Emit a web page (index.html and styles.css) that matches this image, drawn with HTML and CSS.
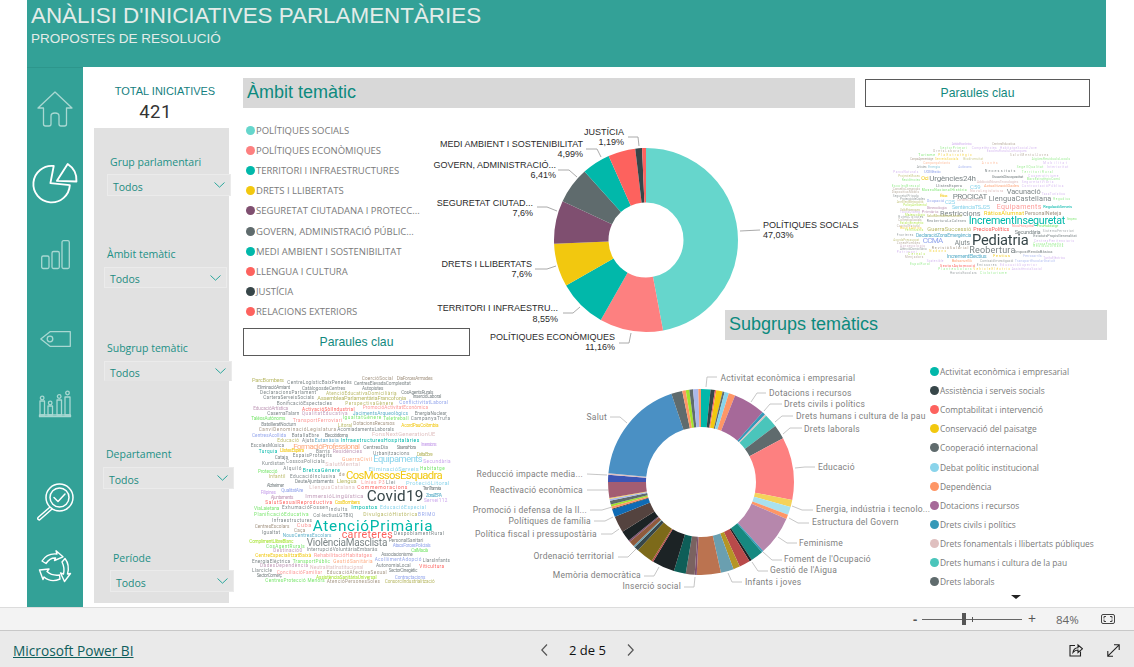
FILE: index.html
```html
<!DOCTYPE html>
<html lang="ca">
<head>
<meta charset="utf-8">
<title>Anàlisi d'iniciatives parlamentàries</title>
<link rel="stylesheet" href="styles.css">
</head>
<body>
<div class="app">
  <div class="report">
    <header class="report-head">
      <h1>ANÀLISI D'INICIATIVES PARLAMENTÀRIES</h1>
      <p>PROPOSTES DE RESOLUCIÓ</p>
    </header>
    <div class="main">
      <nav class="sidebar">
        <svg class="ico ico-home" width="36" height="36" viewBox="0 0 36 36"><path d="M18 1 L1 17 H6.500 V33 Q6.500 35 8.500 35 H12 Q14 35 14 33 V25 Q14 22 18 22 Q22 22 22 25 V33 Q22 35 24 35 H27.500 Q29.500 35 29.500 33 V17 H35 Z"/></svg>
        <svg class="ico ico-pie" width="46" height="40" viewBox="0 0 46 41"><path d="M21.700 3.100 L18.300 20.700 L38.200 22.700 A18.700 18.700 0 1 1 21.700 3.100 Z"/><path d="M36 1 L25 18.300 L45 19 A20 20 0 0 0 36 1 Z"/></svg>
        <svg class="ico ico-bars" width="29" height="29" viewBox="0 0 29 29"><rect x="0.700" y="16" width="7.300" height="12.500" rx="1.500"/><rect x="11" y="11.500" width="7.300" height="17" rx="1.500"/><rect x="21" y="0.700" width="7.300" height="27.800" rx="1.500"/></svg>
        <svg class="ico ico-tag" width="31" height="16" viewBox="0 0 31 16"><path d="M0.800 8 L10 0.700 H30.300 V15.300 H10 Z"/><circle cx="10" cy="8" r="2.800"/></svg>
        <svg class="ico ico-podium" width="32" height="27" viewBox="0 0 32 27"><rect x="1" y="11" width="4.500" height="14"/><rect x="9" y="16" width="4.500" height="9"/><rect x="18" y="10" width="4.500" height="15"/><rect x="26" y="7" width="5" height="18"/><rect x="0.500" y="25" width="31" height="1.700"/><circle cx="3.200" cy="8" r="1.800"/><circle cx="11.200" cy="13" r="1.800"/><circle cx="20.200" cy="6.500" r="1.800"/><circle cx="28.500" cy="3" r="1.800"/></svg>
        <svg class="ico ico-search" width="38" height="38" viewBox="0 0 38 38"><circle cx="23.500" cy="14.500" r="13.500"/><circle cx="23.500" cy="14.500" r="9.500"/><path d="M18 14.500 l4 4 l7 -7.500"/><path d="M13.500 24.500 L2 34.500 Q1 36.500 3.500 37 L15.500 26.500"/></svg>
        <svg class="ico ico-cycle" width="32" height="33" viewBox="0 0 32 33"><path d="M3 11 Q8 3 18 4 L17 0.800 L24 6.800 L15.500 10.500 L16.500 8 Q11 7.500 7 13.500 Z"/><path d="M26 8.500 Q31 15 28.500 24 L31.500 23.500 L25.500 31.500 L21.500 23 L24.500 24 Q26 18 23 12 Z"/><path d="M21 29 Q12 33 5 27 L4 29.500 L0.500 20 L10 19 L8 21.500 Q13 26 20.500 25 Z"/></svg>
      </nav>
      <aside class="filters">
        <div class="kpi">
          <div class="kpi-label">TOTAL INICIATIVES</div>
          <div class="kpi-value">421</div>
        </div>
        <div class="panel">
          <div class="slicer slicer-1">
            <div class="slicer-label">Grup parlamentari</div>
            <div class="slicer-box"><span>Todos</span><svg class="chev" width="11" height="6" viewBox="0 0 11 6"><path d="M0.500 0.500 L5.500 5.200 L10.500 0.500"/></svg></div>
          </div>
          <div class="slicer slicer-2">
            <div class="slicer-label">Àmbit temàtic</div>
            <div class="slicer-box"><span>Todos</span><svg class="chev" width="11" height="6" viewBox="0 0 11 6"><path d="M0.500 0.500 L5.500 5.200 L10.500 0.500"/></svg></div>
          </div>
          <div class="slicer slicer-3">
            <div class="slicer-label">Subgrup temàtic</div>
            <div class="slicer-box"><span>Todos</span><svg class="chev" width="11" height="6" viewBox="0 0 11 6"><path d="M0.500 0.500 L5.500 5.200 L10.500 0.500"/></svg></div>
          </div>
          <div class="slicer slicer-4">
            <div class="slicer-label">Departament</div>
            <div class="slicer-box"><span>Todos</span><svg class="chev" width="11" height="6" viewBox="0 0 11 6"><path d="M0.500 0.500 L5.500 5.200 L10.500 0.500"/></svg></div>
          </div>
          <div class="slicer slicer-5">
            <div class="slicer-label">Període</div>
            <div class="slicer-box"><span>Todos</span><svg class="chev" width="11" height="6" viewBox="0 0 11 6"><path d="M0.500 0.500 L5.500 5.200 L10.500 0.500"/></svg></div>
          </div>
        </div>
      </aside>
      <section class="canvas">
        <h2 class="bar-title title-ambit">Àmbit temàtic</h2>
        <div class="key-btn btn-top">Paraules clau</div>
        <ul class="legend legend-ambit">
          <li><i class="dot d-turq"></i>POLÍTIQUES SOCIALS</li>
          <li><i class="dot d-salmon"></i>POLÍTIQUES ECONÒMIQUES</li>
          <li><i class="dot d-teal"></i>TERRITORI I INFRAESTRUCTURES</li>
          <li><i class="dot d-yellow"></i>DRETS I LLIBERTATS</li>
          <li><i class="dot d-plum"></i>SEGURETAT CIUTADANA I PROTECC...</li>
          <li><i class="dot d-grey"></i>GOVERN, ADMINISTRACIÓ PÚBLIC...</li>
          <li><i class="dot d-teal"></i>MEDI AMBIENT I SOSTENIBILITAT</li>
          <li><i class="dot d-red"></i>LLENGUA I CULTURA</li>
          <li><i class="dot d-dark"></i>JUSTÍCIA</li>
          <li><i class="dot d-red"></i>RELACIONS EXTERIORS</li>
        </ul>
        <div class="key-btn btn-left">Paraules clau</div>

        <svg class="donut-ambit" width="330" height="240" viewBox="430 120 330 240">
          <g class="ring-a" transform="rotate(-90 646 240)">
            <circle cx="646" cy="240" r="64.750" pathLength="100" class="s-turq" stroke-dasharray="47.030 100" stroke-dashoffset="0"/>
            <circle cx="646" cy="240" r="64.750" pathLength="100" class="s-salmon" stroke-dasharray="11.160 100" stroke-dashoffset="-47.030"/>
            <circle cx="646" cy="240" r="64.750" pathLength="100" class="s-teal" stroke-dasharray="8.550 100" stroke-dashoffset="-58.190"/>
            <circle cx="646" cy="240" r="64.750" pathLength="100" class="s-yellow" stroke-dasharray="7.600 100" stroke-dashoffset="-66.740"/>
            <circle cx="646" cy="240" r="64.750" pathLength="100" class="s-plum" stroke-dasharray="7.600 100" stroke-dashoffset="-74.340"/>
            <circle cx="646" cy="240" r="64.750" pathLength="100" class="s-grey" stroke-dasharray="6.410 100" stroke-dashoffset="-81.940"/>
            <circle cx="646" cy="240" r="64.750" pathLength="100" class="s-teal" stroke-dasharray="4.990 100" stroke-dashoffset="-88.350"/>
            <circle cx="646" cy="240" r="64.750" pathLength="100" class="s-red" stroke-dasharray="4.770 100" stroke-dashoffset="-93.340"/>
            <circle cx="646" cy="240" r="64.750" pathLength="100" class="s-dark" stroke-dasharray="1.190 100" stroke-dashoffset="-98.110"/>
            <circle cx="646" cy="240" r="64.750" pathLength="100" class="s-red" stroke-dasharray="0.700 100" stroke-dashoffset="-99.300"/>
          </g>
          <g class="leaders">
            <polyline points="628,137 638,137 639,146"/>
            <polyline points="586,149 597,149 601,157"/>
            <polyline points="558,170 569,170 577,177"/>
            <polyline points="537,207 547,207 557,211"/>
            <polyline points="535,269 547,269 556,266"/>
            <polyline points="563,313 573,313 580,307"/>
            <polyline points="619,343 629,343 631,333"/>
            <polyline points="740,231 760,230"/>
          </g>
          <g class="labels-a end">
            <text x="624" y="135">JUSTÍCIA</text><text x="624" y="145">1,19%</text>
            <text x="583" y="147">MEDI AMBIENT I SOSTENIBILITAT</text><text x="583" y="157">4,99%</text>
            <text x="556" y="168">GOVERN, ADMINISTRACIÓ...</text><text x="556" y="178">6,41%</text>
            <text x="533" y="206">SEGURETAT CIUTAD...</text><text x="533" y="216">7,6%</text>
            <text x="532" y="267">DRETS I LLIBERTATS</text><text x="532" y="277">7,6%</text>
            <text x="558" y="311">TERRITORI I INFRAESTRU...</text><text x="558" y="322">8,55%</text>
            <text x="615" y="340">POLÍTIQUES ECONÒMIQUES</text><text x="615" y="350">11,16%</text>
          </g>
          <g class="labels-a">
            <text x="763" y="228">POLÍTIQUES SOCIALS</text><text x="763" y="238">47,03%</text>
          </g>
        </svg>

        <svg class="cloud cloud-top" width="200" height="150" viewBox="0 0 600 450">
          <text class="w f9 c-lv" x="185" y="44" textLength="60">ActivitatEconòmica</text>
          <text class="w f9 c-br" x="306" y="44" textLength="70">CentresEducatius</text>
          <text class="w f9 c-gr" x="150" y="56" textLength="80">SectorPrimari</text>
          <text class="w f9 c-lv" x="245" y="56" textLength="75">Competències</text>
          <text class="w f9 c-lv" x="330" y="56" textLength="110">HabitatgeSocialJove</text>
          <text class="w f9 c-br" x="130" y="66" textLength="90">DretsLaborals</text>
          <text class="w f9 c-lv" x="290" y="66" textLength="120">EscolesRuralsComarques</text>
          <text class="w f10 c-gr" x="85" y="78" textLength="50">Turisme</text>
          <text class="w f9 c-y" x="145" y="78" textLength="100">PlaEstratègic</text>
          <text class="w f9 c-br" x="360" y="78" textLength="115">SalutMentalJoves</text>
          <text class="w f9 c-br" x="60" y="91" textLength="70">CampsAprenentatge</text>
          <text class="w f9 c-ol" x="220" y="91" textLength="60">Biodiversitat</text>
          <text class="w f9 c-y" x="135" y="91" textLength="70">ServeisSocials</text>
          <text class="w f9 c-gr" x="425" y="91" textLength="115">AigüesResidualsLocals</text>
          <text class="w f9 c-o" x="100" y="103" textLength="80">CampanyaInfants</text>
          <text class="w f9 c-o" x="275" y="103" textLength="48">Aranès</text>
          <text class="w f9 c-lv" x="460" y="103" textLength="70">Mobilitat</text>
          <text class="w f9 c-g" x="80" y="115" textLength="30">Artistes</text>
          <text class="w f9 c-u" x="115" y="115" textLength="35">Energia</text>
          <text class="w f9 c-pv" x="205" y="115" textLength="40">Autònoms</text>
          <text class="w f9 c-gr" x="380" y="115" textLength="80">SegellQualitat</text>
          <text class="w f9 c-lv" x="470" y="115" textLength="65">Interioritat</text>
          <text class="w f9 c-lv" x="10" y="128" textLength="75">ParcsNaturals</text>
          <text class="w f12 c-pv" x="102" y="128" textLength="50">UOMéstic</text>
          <text class="w f11 c-g" x="284" y="125" textLength="92">Necessitats</text>
          <text class="w f9 c-gr" x="395" y="128" textLength="95">TerritoriRural</text>
          <text class="w f24 c-g" x="118" y="152" textLength="140">Urgències24h</text>
          <text class="w f16 c-y" x="94" y="150" textLength="22">Oci</text>
          <text class="w f9 c-ol" x="25" y="141" textLength="65">ProjecteMuseu</text>
          <text class="w f12 c-g" x="305" y="145" textLength="95">UsuarisDiscapacitat</text>
          <text class="w f9 c-lv" x="415" y="140" textLength="90">Cooperativisme</text>
          <text class="w f9 c-gr" x="410" y="150" textLength="100">MarcEstratègicComú</text>
          <text class="w f9 c-gr" x="35" y="153" textLength="55">Residències</text>
          <text class="w f11 c-pk" x="260" y="158" textLength="125">AddiccióNovesTecnologies</text>
          <text class="w f9 c-lv" x="395" y="160" textLength="95">SeguretatViària</text>
          <text class="w f18 c-b" x="240" y="178" textLength="32">C59</text>
          <text class="w f12 c-g" x="138" y="172" textLength="78">LlistesEspera</text>
          <text class="w f12 c-o" x="282" y="172" textLength="105">ActualitzacióDades</text>
          <text class="w f9 c-gr" x="5" y="170" textLength="85">EscolesBressol</text>
          <text class="w f9 c-lv" x="395" y="172" textLength="125">ContractacióPública</text>
          <text class="w f9 c-br" x="8" y="180" textLength="82">ConsellsComarcals</text>
          <text class="w f10 c-gr" x="95" y="183" textLength="135">MuseuNacionalHistòria</text>
          <text class="w f11 c-pk" x="240" y="186" textLength="100">NovaLegislatura</text>
          <text class="w f22 c-g" x="350" y="192" textLength="102">Vacunació</text>
          <text class="w f9 c-br" x="5" y="190" textLength="82">DispositiusMòbils</text>
          <text class="w f12 c-y" x="150" y="200" textLength="22">Ètica</text>
          <text class="w f24 c-g" x="188" y="206" textLength="104">PROCICAT</text>
          <text class="w f22 c-g" x="296" y="214" textLength="188">LlenguaCastellana</text>
          <text class="w f9 c-lv" x="455" y="196" textLength="70">TaxaTurística</text>
          <text class="w f9 c-g" x="8" y="200" textLength="78">SeguretatPrivada</text>
          <text class="w f9 c-gr" x="490" y="210" textLength="50">Regadius</text>
          <text class="w f18 c-b" x="165" y="222" textLength="30">C25</text>
          <text class="w f11 c-pv" x="110" y="216" textLength="52">Ocupació</text>
          <text class="w f11 c-pk" x="200" y="214" textLength="78">CerclesComunals</text>
          <text class="w f9 c-g" x="30" y="210" textLength="75">ProtecciódeDades</text>
          <text class="w f9 c-ol" x="20" y="220" textLength="80">AnellVerdMetropolità</text>
          <text class="w f17 c-b" x="186" y="236" textLength="114">SentènciaTSJ25</text>
          <text class="w f21 c-s" x="320" y="238" textLength="134">Equipaments</text>
          <text class="w f12 c-t" x="460" y="234" textLength="86">RegulacióServeis</text>
          <text class="w f9 c-lm" x="40" y="228" textLength="70">PolicyAmbiental</text>
          <text class="w f12 c-p" x="110" y="238" textLength="60">Ginecologia</text>
          <text class="w f22 c-g" x="150" y="258" textLength="122">Restriccions</text>
          <text class="w f17 c-y" x="282" y="254" textLength="120">RàtiosAlumnat</text>
          <text class="w f16 c-br" x="404" y="256" textLength="110">PersonalNeteja</text>
          <text class="w f12 c-p" x="95" y="248" textLength="50">Primària</text>
          <text class="w f9 c-ol" x="30" y="242" textLength="60">VallsPirinenques</text>
          <text class="w f9 c-lv" x="30" y="250" textLength="60">TaulaDiàleg</text>
          <text class="w f10 c-ol" x="110" y="262" textLength="105">SalutMentalInfantJuvenil</text>
          <text class="w f32 c-t" x="236" y="283" textLength="290">IncrementInseguretat</text>
          <text class="w f9 c-lm" x="45" y="258" textLength="60">Meteorologia</text>
          <text class="w f9 c-g" x="25" y="265" textLength="75">RutesCiclistes</text>
          <text class="w f9 c-gr" x="530" y="270" textLength="30">Sequera</text>
          <text class="w f10 c-g" x="110" y="276" textLength="118">ReoberturaLaCaleses</text>
          <text class="w f9 c-br" x="25" y="272" textLength="70">Col·lectiusSocials</text>
          <text class="w f9 c-lm" x="30" y="281" textLength="70">EstalviEnergètic</text>
          <text class="w f17 c-ol" x="112" y="302" textLength="132">GuerraSuccessió</text>
          <text class="w f16 c-r" x="250" y="304" textLength="108">PreciosPolítics</text>
          <text class="w f12 c-s" x="365" y="290" textLength="68">NouHospital</text>
          <text class="w f17 c-g" x="374" y="312" textLength="78">Secundària</text>
          <text class="w f10 c-gr" x="440" y="292" textLength="65">PreuHabitatge</text>
          <text class="w f9 c-br" x="20" y="290" textLength="70">CapitalNatural</text>
          <text class="w f9 c-y" x="30" y="297" textLength="65">BarrisAntics</text>
          <text class="w f9 c-lm" x="45" y="304" textLength="55">Fertilitzants</text>
          <text class="w f9 c-g" x="458" y="306" textLength="95">SistemaFerroviari</text>
          <text class="w f15 c-u" x="78" y="320" textLength="166">DeclaracióZonaEmergència</text>
          <text class="w f9 c-g" x="20" y="318" textLength="50">Fronteres</text>
          <text class="w f11 c-g" x="430" y="322" textLength="130">EstatutsPropisGeneralitat</text>
          <text class="w f24 c-pv" x="98" y="340" textLength="62">CCMA</text>
          <text class="w f20 c-g" x="194" y="344" textLength="46">Ajuts</text>
          <text class="w f44 c-d" x="246" y="346" textLength="170">Pediatria</text>
          <text class="w f9 c-ol" x="10" y="332" textLength="78">AcordsPressupost</text>
          <text class="w f9 c-lv" x="432" y="336" textLength="120">CentresPenitenciaris</text>
          <text class="w f9 c-br" x="20" y="341" textLength="70">ZonesHumides</text>
          <text class="w f9 c-gr" x="430" y="344" textLength="90">CursosFormatius</text>
          <text class="w f11 c-br" x="125" y="356" textLength="110">RevisióSalarial</text>
          <text class="w f27 c-g" x="238" y="368" textLength="138">Reobertura</text>
          <text class="w f9 c-p" x="30" y="350" textLength="75">Agroecologia</text>
          <text class="w f9 c-gr" x="430" y="352" textLength="90">ResidusUrbans</text>
          <text class="w f9 c-g" x="30" y="359" textLength="80">AtencióDomiciliària</text>
          <text class="w f12 c-g" x="375" y="368" textLength="112">ImpostRendaBàsica</text>
          <text class="w f9 c-y" x="118" y="367" textLength="50">Nadons</text>
          <text class="w f17 c-u" x="170" y="384" textLength="120">IncrementElectius</text>
          <text class="w f9 c-lv" x="20" y="368" textLength="60">Patrimoni</text>
          <text class="w f9 c-lm" x="55" y="376" textLength="50">Cereals</text>
          <text class="w f9 c-pv" x="400" y="381" textLength="55">Ferrocarrils</text>
          <text class="w f9 c-lv" x="460" y="388" textLength="65">TarifaElèctrica</text>
          <text class="w f12 c-o" x="185" y="397" textLength="60">Bolsanvelló</text>
          <text class="w f11 c-y" x="310" y="382" textLength="50">Festius</text>
          <text class="w f9 c-br" x="45" y="384" textLength="55">Menjadors</text>
          <text class="w f9 c-lv" x="110" y="396" textLength="50">Sostenible</text>
          <text class="w f11 c-r" x="150" y="410" textLength="105">SectorAutomoció</text>
          <text class="w f9 c-g" x="270" y="396" textLength="100">ComissióInvestigació</text>
          <text class="w f9 c-pv" x="375" y="396" textLength="120">TransportEscolarGratuït</text>
          <text class="w f9 c-gr" x="60" y="404" textLength="60">EspaiRural</text>
          <text class="w f9 c-g" x="260" y="408" textLength="60">Emissores</text>
          <text class="w f9 c-lv" x="330" y="409" textLength="110">EducacióSuperior</text>
          <text class="w f9 c-gr" x="145" y="420" textLength="100">PlantesSolars</text>
          <text class="w f9 c-y" x="250" y="420" textLength="110">VehicleElèctric</text>
          <text class="w f9 c-lv" x="365" y="420" textLength="90">AssistènciaSocial</text>
          <text class="w f9 c-g" x="180" y="431" textLength="80">HorarisEscolars</text>
          <text class="w f9 c-gr" x="270" y="431" textLength="80">Cicloturisme</text>
        </svg>

        <h2 class="bar-title title-sub">Subgrups temàtics</h2>

        <svg class="cloud cloud-left" width="220" height="247" viewBox="9 0 660 741">
          <text class="w f17 c-ol" x="36" y="65" textLength="96">ParcBombers</text>
          <text class="w f14 c-g" x="142" y="71" textLength="193">CentreLogísticBaixPenedès</text>
          <text class="w f14 c-br" x="365" y="59" textLength="94">CoercióSocial</text>
          <text class="w f14 c-br" x="470" y="59" textLength="108">DiaForcesArmades</text>
          <text class="w f14 c-g" x="342" y="74" textLength="170">CentresElevadaComplexitat</text>
          <text class="w f14 c-g" x="52" y="86" textLength="98">EliminacióAmiant</text>
          <text class="w f14 c-g" x="186" y="90" textLength="130">CatàlogosdeCentres</text>
          <text class="w f14 c-g" x="366" y="90" textLength="64">Autopistes</text>
          <text class="w f14 c-g" x="60" y="101" textLength="168">DeclaracionsParlament</text>
          <text class="w f14 c-ol" x="258" y="104" textLength="212">AtencióEducativaDomiciliària</text>
          <text class="w f14 c-g" x="484" y="101" textLength="96">CosAgentsRurals</text>
          <text class="w f14 c-g" x="70" y="118" textLength="152">CarteraServeisSocials</text>
          <text class="w f17 c-ol" x="232" y="120" textLength="266">AssembleaParlamentàriaFrancofonia</text>
          <text class="w f14 c-g" x="518" y="115" textLength="86">InsercióLaboral</text>
          <text class="w f14 c-g" x="110" y="134" textLength="166">BonificacióEspectacles</text>
          <text class="w f14 c-ol" x="316" y="134" textLength="144">PerspectivaGènere</text>
          <text class="w f14 c-pv" x="478" y="131" textLength="146">ConflictivitatLaboral</text>
          <text class="w f14 c-p" x="40" y="149" textLength="104">EducacióArtística</text>
          <text class="w f14 c-r" x="186" y="152" textLength="158">ActivacióSòlIndustrial</text>
          <text class="w f14 c-s" x="368" y="148" textLength="196">PromocióActivitatEconòmica</text>
          <text class="w f14 c-g" x="82" y="166" textLength="96">CasernaTalarn</text>
          <text class="w f14 c-p" x="185" y="166" textLength="138">QualitatEducativa</text>
          <text class="w f15 c-u" x="338" y="164" textLength="166">JacimentsArqueològics</text>
          <text class="w f14 c-g" x="524" y="166" textLength="96">EnergiaNuclear</text>
          <text class="w f14 c-gr" x="34" y="181" textLength="102">TaléosAutònoms</text>
          <text class="w f15 c-s" x="158" y="185" textLength="148">TransportFerroviari</text>
          <text class="w f14 c-gr" x="308" y="178" textLength="116">IgualtatGènere</text>
          <text class="w f14 c-gr" x="430" y="180" textLength="76">Teletreball</text>
          <text class="w f14 c-g" x="512" y="181" textLength="118">CampanyaTrufa</text>
          <text class="w f14 c-g" x="64" y="197" textLength="104">BatxilleratNocturn</text>
          <text class="w f14 c-ol" x="294" y="200" textLength="42">Litoral</text>
          <text class="w f14 c-br" x="340" y="196" textLength="124">DotacionsRecursos</text>
          <text class="w f14 c-y" x="484" y="202" textLength="112">AcordPauColòmbia</text>
          <text class="w f14 c-br" x="56" y="212" textLength="232">CanviDenominacióLegislatura</text>
          <text class="w f14 c-g" x="292" y="214" textLength="170">AcomiadamentsLaborals</text>
          <text class="w f14 c-pv" x="36" y="230" textLength="102">CentresAcollida</text>
          <text class="w f14 c-g" x="155" y="230" textLength="82">BatallaEbre</text>
          <text class="w f14 c-g" x="254" y="231" textLength="70">Elecciódioma</text>
          <text class="w f17 c-pk" x="396" y="228" textLength="190">FonsNextGenerationUE</text>
          <text class="w f14 c-ol" x="112" y="245" textLength="65">Educació</text>
          <text class="w f14 c-g" x="186" y="245" textLength="36">Ajuts</text>
          <text class="w f15 c-u" x="224" y="245" textLength="72">Eutanàsia</text>
          <text class="w f15 c-t" x="302" y="246" textLength="236">InfraestructuresHospitalàries</text>
          <text class="w f14 c-lv" x="544" y="257" textLength="46">Invensions</text>
          <text class="w f14 c-g" x="32" y="262" textLength="100">EscolesMúsica</text>
          <text class="w f24 c-o" x="160" y="266" textLength="200">FormacióProfessional</text>
          <text class="w f15 c-g" x="370" y="268" textLength="74">CentresDia</text>
          <text class="w f14 c-g" x="470" y="268" textLength="58">SísenaHora</text>
          <text class="w f14 c-t" x="56" y="278" textLength="56">Turquia</text>
          <text class="w f14 c-y" x="120" y="277" textLength="72">LlistesEspera</text>
          <text class="w f14 c-g" x="228" y="280" textLength="42">Barris</text>
          <text class="w f15 c-p" x="278" y="280" textLength="88">Residències</text>
          <text class="w f14 c-g" x="400" y="286" textLength="108">Urbanitzacions</text>
          <text class="w f14 c-ol" x="530" y="287" textLength="48">DeltaEbre</text>
          <text class="w f14 c-g" x="104" y="296" textLength="40">Cataja</text>
          <text class="w f14 c-g" x="158" y="292" textLength="118">EspaisProtegits</text>
          <text class="w f15 c-o" x="306" y="302" textLength="90">GuerraCivil</text>
          <text class="w f28 c-b" x="400" y="307" textLength="148">Equipaments</text>
          <text class="w f14 c-lv" x="550" y="308" textLength="82">Secundària</text>
          <text class="w f14 c-g" x="66" y="314" textLength="68">Kurdistan</text>
          <text class="w f14 c-g" x="138" y="308" textLength="116">CossosPolicials</text>
          <text class="w f17 c-pk" x="256" y="319" textLength="104">SalutMental</text>
          <text class="w f14 c-g" x="130" y="329" textLength="54">Alquiló</text>
          <text class="w f15 c-t" x="188" y="337" textLength="112">BretxaGènere</text>
          <text class="w f17 c-b" x="386" y="332" textLength="150">EliminacióServeis</text>
          <text class="w f14 c-gr" x="540" y="329" textLength="74">Habitatge</text>
          <text class="w f14 c-gr" x="54" y="338" textLength="58">Protecció</text>
          <text class="w f14 c-ol" x="86" y="353" textLength="50">Infantil</text>
          <text class="w f14 c-g" x="150" y="353" textLength="136">EducacióInclusiva</text>
          <text class="w f14 c-br" x="296" y="349" textLength="18">de</text>
          <text class="w f34 c-y" x="318" y="356" textLength="290">CosMossosEsquadra</text>
          <text class="w f14 c-g" x="165" y="368" textLength="116">DeuteAjuntaments</text>
          <text class="w f17 c-ol" x="290" y="369" textLength="60">Llengua</text>
          <text class="w f14 c-s" x="364" y="372" textLength="70">Línies P3</text>
          <text class="w f14 c-g" x="438" y="372" textLength="28">Llei</text>
          <text class="w f17 c-b" x="498" y="374" textLength="130">ProtecióLitoral</text>
          <text class="w f14 c-g" x="80" y="381" textLength="52">Alzheimer</text>
          <text class="w f15 c-pk" x="208" y="388" textLength="136">LlenguaCatalana</text>
          <text class="w f15 c-r" x="352" y="386" textLength="150">Commemoracions</text>
          <text class="w f14 c-g" x="548" y="391" textLength="56">TrenTramvia</text>
          <text class="w f14 c-lv" x="62" y="401" textLength="46">Filipines</text>
          <text class="w f14 c-pv" x="124" y="395" textLength="66">QualitatAire</text>
          <text class="w f46 c-d" x="380" y="422" textLength="170">Covid19</text>
          <text class="w f14 c-p" x="92" y="416" textLength="68">Ajuntaments</text>
          <text class="w f17 c-p" x="196" y="413" textLength="174">ImmersióLingüística</text>
          <text class="w f14 c-u" x="558" y="412" textLength="48">ZonaZEPA</text>
          <text class="w f14 c-r" x="76" y="433" textLength="200">SalutSexualReproductiva</text>
          <text class="w f15 c-y" x="284" y="433" textLength="76">CosBombers</text>
          <text class="w f14 c-lv" x="552" y="427" textLength="70">Servei112</text>
          <text class="w f14 c-gr" x="42" y="451" textLength="76">ViaLaietana</text>
          <text class="w f14 c-g" x="126" y="447" textLength="138">ExhumacióFossen</text>
          <text class="w f14 c-g" x="266" y="454" textLength="56">Indults</text>
          <text class="w f17 c-t" x="334" y="448" textLength="78">Impostos</text>
          <text class="w f15 c-b" x="420" y="448" textLength="138">EducacióEspecial</text>
          <text class="w f14 c-gr" x="42" y="469" textLength="164">PlanificacióEducativa</text>
          <text class="w f14 c-g" x="220" y="472" textLength="120">Col·lectiusLGTBIQ</text>
          <text class="w f15 c-ol" x="370" y="469" textLength="162">DivulgacióHistòrica</text>
          <text class="w f14 c-pv" x="534" y="469" textLength="52">BRIMO</text>
          <text class="w f14 c-g" x="96" y="487" textLength="120">Infraestructures</text>
          <text class="w f17 c-s" x="170" y="502" textLength="44">Cuba</text>
          <text class="w f14 c-br" x="44" y="505" textLength="104">CentresEscolars</text>
          <text class="w f46 c-t" x="218" y="513" textLength="360">AtencióPrimària</text>
          <text class="w f14 c-br" x="162" y="516" textLength="34">Caça</text>
          <text class="w f14 c-g" x="66" y="521" textLength="54">Igualtat</text>
          <text class="w f14 c-u" x="128" y="531" textLength="146">NousCentresEscolars</text>
          <text class="w f32 c-r" x="305" y="535" textLength="153">carreteres</text>
          <text class="w f14 c-g" x="462" y="526" textLength="150">DespoblamentRural</text>
          <text class="w f14 c-g" x="446" y="547" textLength="104">PersonalSanitari</text>
          <text class="w f14 c-lm" x="28" y="549" textLength="132">ComplimentLlibreBlanc</text>
          <text class="w f30 c-g" x="200" y="558" textLength="242">ViolènciaMasclista</text>
          <text class="w f14 c-gr" x="78" y="563" textLength="116">CosAgentRurals</text>
          <text class="w f14 c-pv" x="458" y="562" textLength="114">AtacsForcesPolicials</text>
          <text class="w f14 c-p" x="100" y="577" textLength="86">Destinació0</text>
          <text class="w f14 c-g" x="200" y="574" textLength="212">InterrupcióVoluntàriaEmbaràs</text>
          <text class="w f14 c-gr" x="514" y="577" textLength="50">CalMacià</text>
          <text class="w f14 c-y" x="46" y="592" textLength="168">CentreEspecialitzatBaixà</text>
          <text class="w f15 c-s" x="222" y="590" textLength="174">RehabilitacióHabitatges</text>
          <text class="w f14 c-g" x="424" y="589" textLength="94">Associacionisme</text>
          <text class="w f14 c-g" x="36" y="608" textLength="114">EnergiaElèctrica</text>
          <text class="w f14 c-gr" x="158" y="608" textLength="112">TransportPúblic</text>
          <text class="w f14 c-o" x="280" y="608" textLength="118">GestióSanitària</text>
          <text class="w f14 c-pv" x="404" y="604" textLength="140">AcolliimentAdopció</text>
          <text class="w f14 c-g" x="548" y="607" textLength="82">LlarsInfants</text>
          <text class="w f14 c-p" x="60" y="622" textLength="144">DadesDependència</text>
          <text class="w f15 c-pk" x="210" y="626" textLength="160">NeutralitatInstitucional</text>
          <text class="w f14 c-g" x="408" y="621" textLength="104">AutonomiaLocal</text>
          <text class="w f14 c-r" x="538" y="625" textLength="74">Viticultura</text>
          <text class="w f14 c-g" x="36" y="637" textLength="60">Llarcicle</text>
          <text class="w f14 c-s" x="110" y="641" textLength="136">ConciliacióFamiliar</text>
          <text class="w f14 c-br" x="260" y="641" textLength="180">EducacióAfectivaSexual</text>
          <text class="w f14 c-g" x="446" y="637" textLength="86">SectorCinegètic</text>
          <text class="w f14 c-g" x="50" y="651" textLength="76">SectorComerç</text>
          <text class="w f14 c-lm" x="228" y="656" textLength="182">AssistènciaSanitàriaUniversal</text>
          <text class="w f14 c-pv" x="464" y="656" textLength="92">Contractacions</text>
          <text class="w f14 c-gr" x="76" y="667" textLength="178">CentresProtecció Menors</text>
          <text class="w f14 c-br" x="260" y="669" textLength="160">AtencióPersonesSoles</text>
          <text class="w f14 c-ol" x="434" y="669" textLength="150">ConsorciIndustrialització</text>
        </svg>

        <svg class="donut-sub" width="458" height="247" viewBox="470 360 458 247">
          <g class="ring-b" transform="rotate(-90 701 482)">
            <circle cx="701" cy="482" r="74" pathLength="360" class="s-teal" stroke-dasharray="6 360" stroke-dashoffset="0"/>
            <circle cx="701" cy="482" r="74" pathLength="360" class="s-dark" stroke-dasharray="2.700 360" stroke-dashoffset="-6"/>
            <circle cx="701" cy="482" r="74" pathLength="360" class="s-red" stroke-dasharray="0.800 360" stroke-dashoffset="-8.700"/>
            <circle cx="701" cy="482" r="74" pathLength="360" class="s-yellow" stroke-dasharray="4 360" stroke-dashoffset="-9.500"/>
            <circle cx="701" cy="482" r="74" pathLength="360" class="s-grey" stroke-dasharray="1.300 360" stroke-dashoffset="-13.500"/>
            <circle cx="701" cy="482" r="74" pathLength="360" class="s-sky" stroke-dasharray="2.700 360" stroke-dashoffset="-14.800"/>
            <circle cx="701" cy="482" r="74" pathLength="360" class="s-orange" stroke-dasharray="4 360" stroke-dashoffset="-17.500"/>
            <circle cx="701" cy="482" r="74" pathLength="360" class="s-purple" stroke-dasharray="20 360" stroke-dashoffset="-21.500"/>
            <circle cx="701" cy="482" r="74" pathLength="360" class="s-blue" stroke-dasharray="2 360" stroke-dashoffset="-41.500"/>
            <circle cx="701" cy="482" r="74" pathLength="360" class="s-pink" stroke-dasharray="1 360" stroke-dashoffset="-43.500"/>
            <circle cx="701" cy="482" r="74" pathLength="360" class="s-aqua" stroke-dasharray="8.500 360" stroke-dashoffset="-44.500"/>
            <circle cx="701" cy="482" r="74" pathLength="360" class="s-grey" stroke-dasharray="8.900 360" stroke-dashoffset="-53"/>
            <circle cx="701" cy="482" r="74" pathLength="360" class="s-salmon" stroke-dasharray="39.300 360" stroke-dashoffset="-61.900"/>
            <circle cx="701" cy="482" r="74" pathLength="360" class="s-sand" stroke-dasharray="4.500 360" stroke-dashoffset="-101.200"/>
            <circle cx="701" cy="482" r="74" pathLength="360" class="s-pale" stroke-dasharray="5 360" stroke-dashoffset="-105.700"/>
            <circle cx="701" cy="482" r="74" pathLength="360" class="s-orange" stroke-dasharray="2.700 360" stroke-dashoffset="-110.700"/>
            <circle cx="701" cy="482" r="74" pathLength="360" class="s-mauve" stroke-dasharray="24.600 360" stroke-dashoffset="-113.400"/>
            <circle cx="701" cy="482" r="74" pathLength="360" class="s-blue" stroke-dasharray="1 360" stroke-dashoffset="-138"/>
            <circle cx="701" cy="482" r="74" pathLength="360" class="s-pine" stroke-dasharray="8 360" stroke-dashoffset="-139"/>
            <circle cx="701" cy="482" r="74" pathLength="360" class="s-ink" stroke-dasharray="1.500 360" stroke-dashoffset="-147"/>
            <circle cx="701" cy="482" r="74" pathLength="360" class="s-brick" stroke-dasharray="6.800 360" stroke-dashoffset="-148.500"/>
            <circle cx="701" cy="482" r="74" pathLength="360" class="s-gold" stroke-dasharray="4.200 360" stroke-dashoffset="-155.300"/>
            <circle cx="701" cy="482" r="74" pathLength="360" class="s-steel" stroke-dasharray="8.100 360" stroke-dashoffset="-159.500"/>
            <circle cx="701" cy="482" r="74" pathLength="360" class="s-clay" stroke-dasharray="15.100 360" stroke-dashoffset="-167.600"/>
            <circle cx="701" cy="482" r="74" pathLength="360" class="s-plum" stroke-dasharray="1.300 360" stroke-dashoffset="-182.700"/>
            <circle cx="701" cy="482" r="74" pathLength="360" class="s-taupe" stroke-dasharray="5.500 360" stroke-dashoffset="-184"/>
            <circle cx="701" cy="482" r="74" pathLength="360" class="s-fir" stroke-dasharray="7.500 360" stroke-dashoffset="-189.500"/>
            <circle cx="701" cy="482" r="74" pathLength="360" class="s-ink" stroke-dasharray="14 360" stroke-dashoffset="-197"/>
            <circle cx="701" cy="482" r="74" pathLength="360" class="s-brick" stroke-dasharray="1 360" stroke-dashoffset="-211"/>
            <circle cx="701" cy="482" r="74" pathLength="360" class="s-olive" stroke-dasharray="10.700 360" stroke-dashoffset="-212"/>
            <circle cx="701" cy="482" r="74" pathLength="360" class="s-dark" stroke-dasharray="2.800 360" stroke-dashoffset="-222.700"/>
            <circle cx="701" cy="482" r="74" pathLength="360" class="s-steel" stroke-dasharray="1 360" stroke-dashoffset="-225.500"/>
            <circle cx="701" cy="482" r="74" pathLength="360" class="s-umber" stroke-dasharray="3.500 360" stroke-dashoffset="-226.500"/>
            <circle cx="701" cy="482" r="74" pathLength="360" class="s-plum" stroke-dasharray="1 360" stroke-dashoffset="-230"/>
            <circle cx="701" cy="482" r="74" pathLength="360" class="s-ink" stroke-dasharray="6.700 360" stroke-dashoffset="-231"/>
            <circle cx="701" cy="482" r="74" pathLength="360" class="s-cocoa" stroke-dasharray="10.300 360" stroke-dashoffset="-237.700"/>
            <circle cx="701" cy="482" r="74" pathLength="360" class="s-royal" stroke-dasharray="4.700 360" stroke-dashoffset="-248"/>
            <circle cx="701" cy="482" r="74" pathLength="360" class="s-ink" stroke-dasharray="0.500 360" stroke-dashoffset="-252.700"/>
            <circle cx="701" cy="482" r="74" pathLength="360" class="s-orange" stroke-dasharray="1.500 360" stroke-dashoffset="-253.200"/>
            <circle cx="701" cy="482" r="74" pathLength="360" class="s-lime" stroke-dasharray="1.200 360" stroke-dashoffset="-254.700"/>
            <circle cx="701" cy="482" r="74" pathLength="360" class="s-grey" stroke-dasharray="2.400 360" stroke-dashoffset="-255.900"/>
            <circle cx="701" cy="482" r="74" pathLength="360" class="s-peri" stroke-dasharray="1.200 360" stroke-dashoffset="-258.300"/>
            <circle cx="701" cy="482" r="74" pathLength="360" class="s-sand" stroke-dasharray="0.600 360" stroke-dashoffset="-259.500"/>
            <circle cx="701" cy="482" r="74" pathLength="360" class="s-rose" stroke-dasharray="9.900 360" stroke-dashoffset="-260.100"/>
            <circle cx="701" cy="482" r="74" pathLength="360" class="s-indigo" stroke-dasharray="4.500 360" stroke-dashoffset="-270"/>
            <circle cx="701" cy="482" r="74" pathLength="360" class="s-pink" stroke-dasharray="1 360" stroke-dashoffset="-274.500"/>
            <circle cx="701" cy="482" r="74" pathLength="360" class="s-sea" stroke-dasharray="65.900 360" stroke-dashoffset="-275.500"/>
            <circle cx="701" cy="482" r="74" pathLength="360" class="s-grey" stroke-dasharray="6.900 360" stroke-dashoffset="-341.400"/>
            <circle cx="701" cy="482" r="74" pathLength="360" class="s-orange" stroke-dasharray="2.200 360" stroke-dashoffset="-348.300"/>
            <circle cx="701" cy="482" r="74" pathLength="360" class="s-lime" stroke-dasharray="2.200 360" stroke-dashoffset="-350.500"/>
            <circle cx="701" cy="482" r="74" pathLength="360" class="s-grey" stroke-dasharray="2.300 360" stroke-dashoffset="-352.700"/>
            <circle cx="701" cy="482" r="74" pathLength="360" class="s-peri" stroke-dasharray="3.300 360" stroke-dashoffset="-355"/>
            <circle cx="701" cy="482" r="74" pathLength="360" class="s-orange" stroke-dasharray="1.700 360" stroke-dashoffset="-358.300"/>
          </g>
          <g class="leaders leaders-b">
            <polyline points="717,377 707,377 706,387"/>
            <polyline points="766,393 757,393 751,402"/>
            <polyline points="782,404 770,404 764,411"/>
            <polyline points="793,416 782,416 775,422"/>
            <polyline points="802,428 790,428 783,434"/>
            <polyline points="815,467 805,467 795,468"/>
            <polyline points="813,510 802,510 792,506"/>
            <polyline points="809,523 798,523 789,518"/>
            <polyline points="797,543 787,543 778,537"/>
            <polyline points="782,560 772,560 763,552"/>
            <polyline points="768,571 758,571 752,562"/>
            <polyline points="742,582 732,582 728,573"/>
            <polyline points="684,587 694,587 695,577"/>
            <polyline points="644,576 654,576 659,567"/>
            <polyline points="618,557 628,557 636,549"/>
            <polyline points="601,534 612,534 619,529"/>
            <polyline points="594,521 605,521 613,517"/>
            <polyline points="590,510 602,510 612,507"/>
            <polyline points="587,490 608,490"/>
            <polyline points="587,474 607,475"/>
            <polyline points="610,417 620,417 627,423"/>
          </g>
          <g class="labels-b">
            <text x="720.500" y="381">Activitat econòmica i empresarial</text>
            <text x="769" y="396">Dotacions i recursos</text>
            <text x="784" y="407">Drets civils i polítics</text>
            <text x="796" y="419">Drets humans i cultura de la pau</text>
            <text x="804" y="432">Drets laborals</text>
            <text x="818" y="470">Educació</text>
            <text x="816" y="512">Energia, indústria i tecnolo...</text>
            <text x="812" y="525">Estructura del Govern</text>
            <text x="799" y="546">Feminisme</text>
            <text x="784" y="562">Foment de l'Ocupació</text>
            <text x="770" y="573">Gestió de l'Aigua</text>
            <text x="745" y="585">Infants i joves</text>
          </g>
          <g class="labels-b end">
            <text x="681" y="589">Inserció social</text>
            <text x="641" y="578">Memòria democràtica</text>
            <text x="614" y="559">Ordenació territorial</text>
            <text x="597" y="537">Política fiscal i pressupostària</text>
            <text x="591" y="524">Polítiques de família</text>
            <text x="587" y="513">Promoció i defensa de la ll...</text>
            <text x="583" y="493">Reactivació econòmica</text>
            <text x="583" y="477">Reducció impacte media...</text>
            <text x="607" y="420">Salut</text>
          </g>
        </svg>

        <div class="legend-sub-wrap">
          <ul class="legend legend-sub">
            <li><i class="dot d-teal"></i>Activitat econòmica i empresarial</li>
            <li><i class="dot d-dark"></i>Assistència i serveis socials</li>
            <li><i class="dot d-red"></i>Comptabilitat i intervenció</li>
            <li><i class="dot d-yellow"></i>Conservació del paisatge</li>
            <li><i class="dot d-grey"></i>Cooperació internacional</li>
            <li><i class="dot d-sky"></i>Debat polític institucional</li>
            <li><i class="dot d-orange"></i>Dependència</li>
            <li><i class="dot d-purple"></i>Dotacions i recursos</li>
            <li><i class="dot d-blue"></i>Drets civils i polítics</li>
            <li><i class="dot d-pink"></i>Drets fonamentals i llibertats públiques</li>
            <li><i class="dot d-aqua"></i>Drets humans i cultura de la pau</li>
            <li><i class="dot d-grey"></i>Drets laborals</li>
          </ul>
          <div class="more"></div>
        </div>
      </section>
    </div>
  </div>
  <div class="toolbar">
    <span class="zoom-sign minus">-</span>
    <div class="slider"><i class="tick"></i><i class="thumb"></i></div>
    <span class="zoom-sign plus">+</span>
    <span class="zoom-val">84%</span>
    <svg class="fit" width="14" height="10" viewBox="0 0 14 10"><rect x="0.500" y="0.500" width="13" height="9" rx="1.500"/><path d="M5 2.500 H3 V4.500 M9 2.500 H11 V4.500 M5 7.500 H3 V5.500 M9 7.500 H11 V5.500"/></svg>
  </div>
  <footer class="foot">
    <a class="pbi" href="#">Microsoft Power BI</a>
    <div class="pager">
      <svg class="pg" width="7" height="12" viewBox="0 0 7 12"><path d="M6 0.500 L0.800 6 L6 11.500"/></svg>
      <span>2 de 5</span>
      <svg class="pg" width="7" height="12" viewBox="0 0 7 12"><path d="M1 0.500 L6.200 6 L1 11.500"/></svg>
    </div>
    <div class="foot-tools">
      <svg class="tool" width="14" height="14" viewBox="0 0 14 14"><path d="M6 2.500 H1 V13 H11.500 V8.500"/><path d="M4 9.500 Q4.500 5 9 4.800 V2 L13.500 5.800 L9 9.500 V7 Q6 7 4 9.500 Z"/></svg>
      <svg class="tool" width="13" height="13" viewBox="0 0 13 13"><path d="M0.800 12.200 L12.200 0.800 M7 0.800 H12.200 V6 M0.800 7 V12.200 H6"/></svg>
    </div>
  </footer>
</div>
</body>
</html>
```

FILE: styles.css
```css
* { box-sizing: border-box; }
html, body { margin: 0; padding: 0; background: #fff; }
body { font-family: "Open Sans", sans-serif; overflow: hidden; }
.app { width: 1134px; height: 667px; display: flex; flex-direction: column; }
.report { width: 1079px; height: 607px; margin-left: 27px; flex: none; display: flex; flex-direction: column; }

.report-head { height: 67px; background: #33a197; padding-top: 3px; padding-left: 4px; color: #e4ece9; font-family: "Liberation Sans", sans-serif; flex: none; }
.report-head h1 { margin: 0; font-size: 22.400px; font-weight: 400; line-height: 25px; }
.report-head p { margin: 2px 0 0; font-size: 13.500px; line-height: 17px; }

.main { display: flex; flex: 1; min-height: 0; }
.sidebar { width: 56px; flex: none; background: #33a197; border-top: 1px solid #2d968c; display: flex; flex-direction: column; align-items: center; }
.ico { flex: none; fill: none; stroke: #a9d8d2; stroke-width: 1.300; stroke-linejoin: round; stroke-linecap: round; overflow: visible; }
.ico-home { margin-top: 23px; }
.ico-pie { margin-top: 36px; stroke: #fff; stroke-width: 1.900; }
.ico-bars { margin-top: 37px; }
.ico-tag { margin-top: 62px; }
.ico-podium { margin-top: 43px; }
.ico-search { margin-top: 66px; stroke: #fff; stroke-width: 1.500; }
.ico-cycle { margin-top: 29px; stroke: #fff; stroke-width: 1.400; }

.filters { width: 135px; margin-left: 11px; flex: none; }
.kpi { height: 61px; text-align: center; padding-top: 18px; }
.kpi-label { font-family: "Liberation Sans", sans-serif; font-size: 11px; line-height: 13px; color: #16807f; padding-left: 7px; }
.kpi-value { font-family: Roboto, sans-serif; font-size: 18.500px; line-height: 24px; color: #333; letter-spacing: 0.500px; margin-top: 2px; margin-left: -12px; }
.panel { height: 475px; background: #e1e1e1; overflow: visible; padding-top: 0.100px; }
.slicer-label { font-size: 10.500px; line-height: 14px; color: #1c9086; padding-left: 3px; }
.slicer-box { display: flex; align-items: center; justify-content: space-between; border: 1px solid #ebebeb; background: #e4e4e4; padding: 0 5px 0 5px; color: #1c8b81; font-size: 10.500px; }
.slicer-box span { padding-top: 3px; }
.chev { fill: none; stroke: #2ba79c; stroke-width: 1; flex: none; }
.slicer-1 { margin: 27px 0 0 13px; width: 124px; }
.slicer-1 .slicer-box { margin-top: 5px; height: 22px; }
.slicer-2 { margin: 51px 0 0 10px; width: 123px; }
.slicer-2 .slicer-box { margin-top: 6px; height: 21px; }
.slicer-3 { margin: 53px 0 0 10px; width: 128px; }
.slicer-3 .slicer-box { margin-top: 6px; height: 20px; border-bottom-color: transparent; }
.slicer-4 { margin: 66px 0 0 9px; width: 131px; }
.slicer-4 .slicer-box { margin-top: 6px; height: 22px; }
.slicer-5 { margin: 62px 0 0 16px; width: 124px; }
.slicer-5 .slicer-box { margin-top: 5px; height: 22px; }

.canvas { margin-left: 14px; margin-top: 11px; display: grid; grid-template-columns: 187px 40px 255px 35px 95px 10px 63px 162px 17px; grid-template-rows: 30px 12px 190px 18px 12px 16px 4px 247px; flex: none; width: 864px; height: 529px; }
.bar-title { margin: 0; background: #d8d8d8; color: #0c8a7e; font-family: "Liberation Sans", sans-serif; font-weight: 400; font-size: 18px; line-height: 28px; padding-left: 4px; }
.title-ambit { grid-column: 1 / 6; grid-row: 1; }
.title-sub { grid-column: 4 / 10; grid-row: 4 / 6; line-height: 28px; z-index: 1; }
.key-btn { border: 1px solid #5a5a5a; background: #fff; color: #12897e; font-family: "Liberation Sans", sans-serif; font-size: 12.200px; display: flex; align-items: center; justify-content: center; z-index: 1; }
.btn-top { grid-column: 7 / 9; grid-row: 1; margin-top: 1px; margin-bottom: 1px; }
.btn-left { grid-column: 1 / 3; grid-row: 5 / 7; }

.legend { list-style: none; margin: 0; padding: 0; color: #7a7a7a; }
.legend li { display: flex; align-items: center; white-space: nowrap; }
.dot { width: 9px; height: 9px; border-radius: 50%; flex: none; margin-right: 1px; }
.legend-ambit { grid-column: 1 / 3; grid-row: 3 / 5; font-size: 9.500px; z-index: 1; }
.legend-ambit li { height: 20.200px; padding-left: 3px; }
.legend-sub-wrap { grid-column: 8 / 10; grid-row: 8; padding-top: 2px; padding-left: 2px; }
.legend-sub { font-size: 8.400px; }
.legend-sub li { height: 19.100px; }
.more { width: 0; height: 0; margin: 4px 0 0 81px; border-left: 5px solid transparent; border-right: 5px solid transparent; border-top: 4px solid #222; }

.d-turq { background: #66d6cc; } .d-salmon { background: #fd8080; } .d-teal { background: #01b8aa; }
.d-yellow { background: #f2c80f; } .d-plum { background: #7f4f70; } .d-grey { background: #5f6b6d; }
.d-red { background: #fd625e; } .d-dark { background: #374649; } .d-sky { background: #8ad4eb; }
.d-orange { background: #fe9666; } .d-purple { background: #a66999; } .d-blue { background: #3599b8; }
.d-pink { background: #dfbfbf; } .d-aqua { background: #4ac5bb; }

.donut-ambit { grid-column: 2 / 5; grid-row: 3 / 8; display: block; overflow: visible; }
.donut-sub { grid-column: 3 / 8; grid-row: 8; display: block; overflow: visible; }
.ring-a circle { fill: none; stroke-width: 54.500; }
.ring-b circle { fill: none; stroke-width: 38; }
.s-turq { stroke: #66d6cc; } .s-salmon { stroke: #fd8080; } .s-teal { stroke: #01b8aa; } .s-yellow { stroke: #f2c80f; }
.s-plum { stroke: #7f4f70; } .s-grey { stroke: #5f6b6d; } .s-red { stroke: #fd625e; } .s-dark { stroke: #374649; }
.s-sky { stroke: #8ad4eb; } .s-orange { stroke: #fe9666; } .s-purple { stroke: #a66999; } .s-blue { stroke: #3599b8; }
.s-pink { stroke: #dfbfbf; } .s-aqua { stroke: #4ac5bb; } .s-sand { stroke: #f4d25a; } .s-pale { stroke: #a9e1ee; }
.s-mauve { stroke: #b687ac; } .s-pine { stroke: #168980; } .s-ink { stroke: #1c2325; } .s-brick { stroke: #b84a4a; }
.s-gold { stroke: #b59525; } .s-steel { stroke: #6a9fb0; } .s-clay { stroke: #bb7350; } .s-taupe { stroke: #7a6260; }
.s-fir { stroke: #0e5e58; } .s-olive { stroke: #7d6a1a; } .s-umber { stroke: #8f5a3c; } .s-cocoa { stroke: #54433f; }
.s-royal { stroke: #0f6bb5; } .s-lime { stroke: #a4e22c; } .s-peri { stroke: #a9b8ea; } .s-rose { stroke: #a35d72; }
.s-indigo { stroke: #3c55b5; } .s-sea { stroke: #4a90c4; }

.leaders polyline { fill: none; stroke: #a0a0a0; stroke-width: 0.900; }
.leaders-b polyline { stroke: #c0c0c0; }
.labels-a text { font-family: "Liberation Sans", sans-serif; font-size: 9px; fill: #2b2b2b; }
.labels-b text { font-family: Roboto, sans-serif; font-size: 8.500px; fill: #808080; letter-spacing: 0.260px; }
.end text { text-anchor: end; }

.cloud { display: block; overflow: visible; filter: blur(0.300px); }
.cloud-top { grid-column: 7 / 9; grid-row: 3; margin: 10px 0 0 25px; }
.cloud-top .f9 { opacity: 0.75; }
.cloud-left { grid-column: 1 / 3; grid-row: 8; }
.w { font-family: Roboto, sans-serif; }
.f9 { font-size: 9px; } .f10 { font-size: 10px; } .f11 { font-size: 11px; } .f12 { font-size: 12px; }
.f14 { font-size: 14px; } .f15 { font-size: 15px; } .f16 { font-size: 16px; } .f17 { font-size: 17px; }
.f18 { font-size: 18px; } .f20 { font-size: 20px; } .f21 { font-size: 21px; } .f22 { font-size: 22px; }
.f24 { font-size: 24px; } .f27 { font-size: 27px; } .f28 { font-size: 28px; } .f30 { font-size: 30px; }
.f32 { font-size: 32px; } .f34 { font-size: 34px; } .f44 { font-size: 44px; } .f46 { font-size: 46px; }
.c-t { fill: #01b8aa; } .c-r { fill: #fd625e; } .c-s { fill: #fd9a98; } .c-d { fill: #374649; } .c-g { fill: #7d8688; }
.c-b { fill: #8ad4eb; } .c-o { fill: #fea87e; } .c-p { fill: #c09ab8; } .c-y { fill: #f2c80f; } .c-u { fill: #5fb0ca; }
.c-pk { fill: #dfbfbf; } .c-gr { fill: #7ae66e; } .c-lm { fill: #a4e22c; } .c-pv { fill: #93a5ec; } .c-br { fill: #a59684; }
.c-ol { fill: #b9b967; } .c-lv { fill: #caa5ec; }

.toolbar { height: 23px; flex: none; background: #f3f3f3; border-top: 1px solid #dcdcdc; display: flex; align-items: center; color: #555; }
.zoom-sign { font-size: 13px; line-height: 1; }
.minus { margin-left: 913px; width: 9px; font-weight: 700; }
.slider { position: relative; width: 100px; height: 1px; background: #666; }
.thumb { position: absolute; left: 40px; top: -6px; width: 4px; height: 12px; background: #555; }
.tick { position: absolute; left: 50px; top: -2px; width: 1px; height: 5px; background: #555; }
.plus { margin-left: 6px; width: 12px; font-size: 14px; }
.zoom-val { margin-left: 16px; font-size: 11.500px; width: 32px; color: #666; }
.fit { margin-left: 13px; fill: none; stroke: #444; stroke-width: 1; }

.foot { flex: 1; background: #eaeaea; border-top: 1px solid #c8c8c8; display: grid; grid-template-columns: 1fr auto 1fr; align-items: center; padding: 2px 14px 0 13px; }
.pbi { color: #0f5e5c; font-size: 13.700px; font-weight: 500; text-decoration: underline; }
.pager { display: flex; align-items: center; gap: 21px; color: #111; font-size: 13px; font-weight: 500; margin-left: 42px; }
.pg { fill: none; stroke: #555; stroke-width: 1.200; }
.foot-tools { display: flex; justify-content: flex-end; gap: 24px; align-items: center; }
.tool { fill: none; stroke: #222; stroke-width: 1.100; }
```
